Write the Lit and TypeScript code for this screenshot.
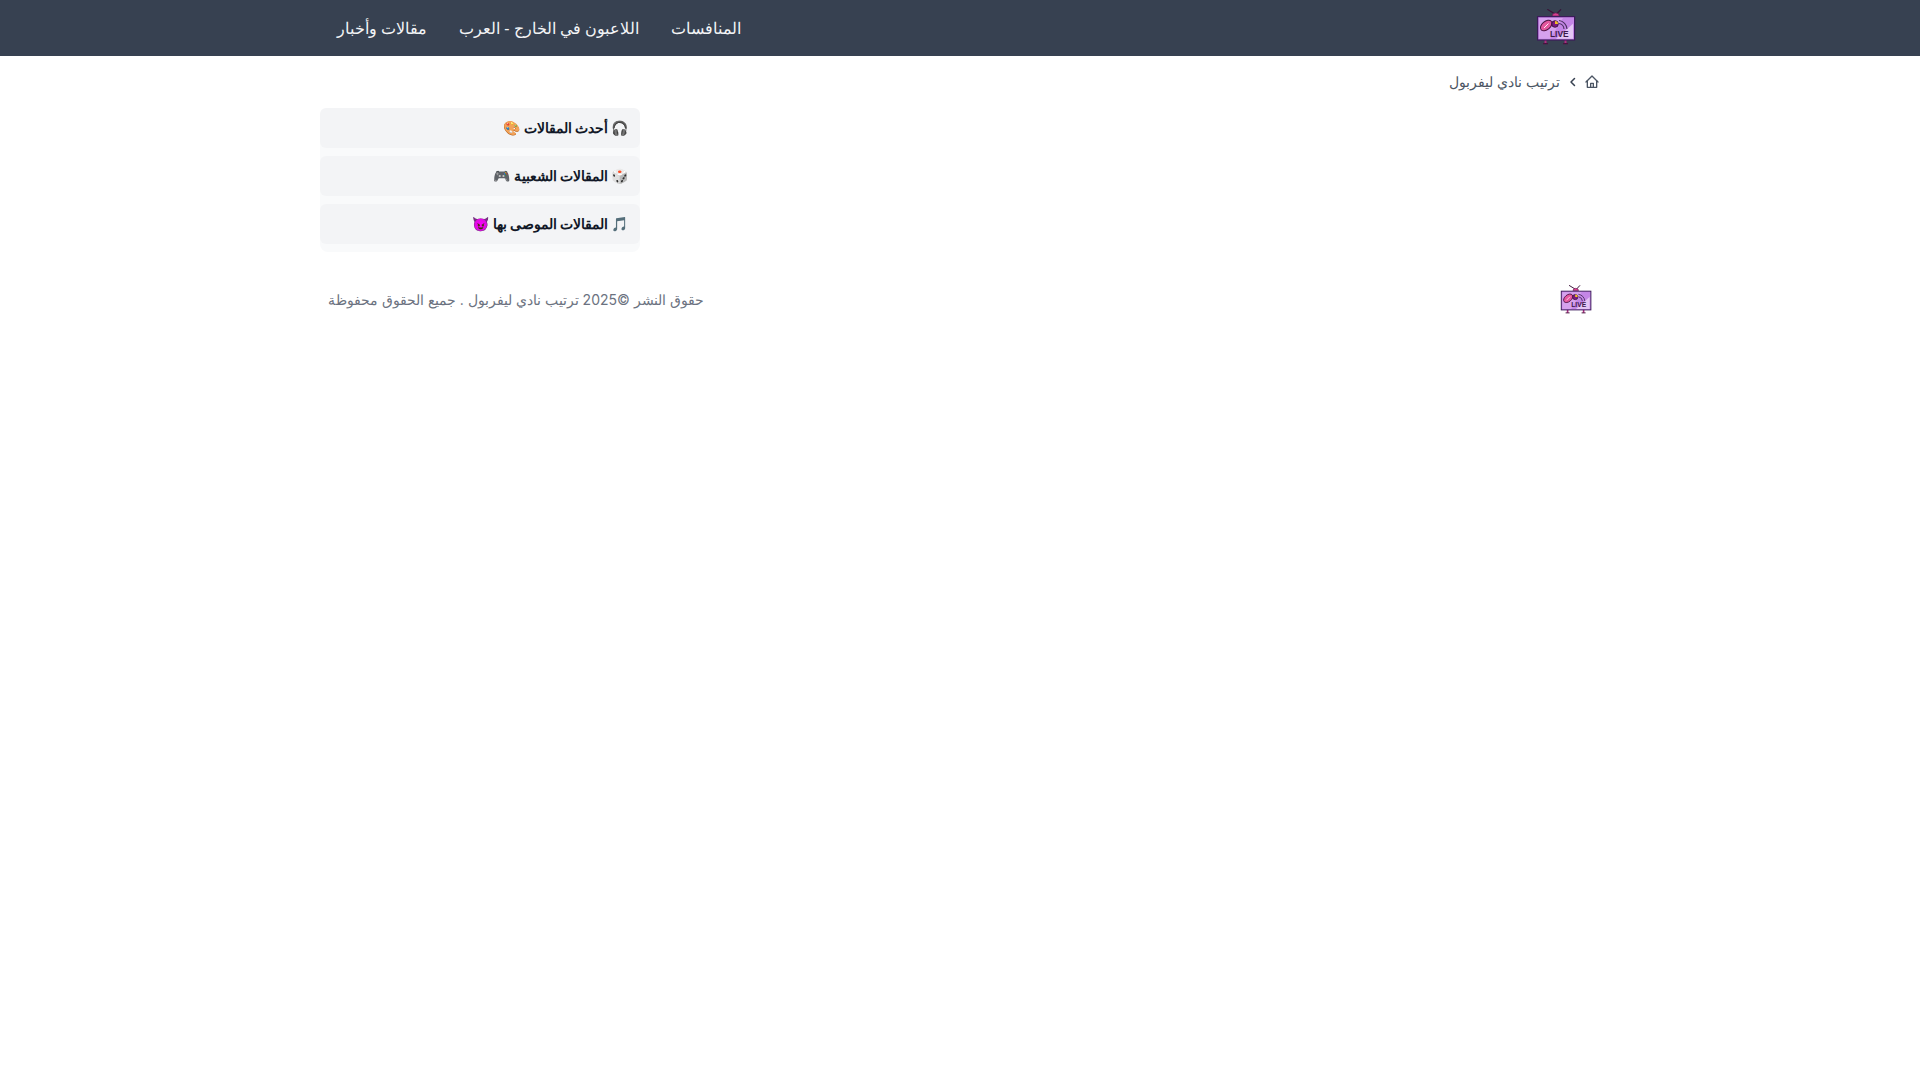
import { LitElement, html, css, svg } from "lit";
import { customElement } from "lit/decorators.js";

const logo = (w: number, h: number) => html`<svg width=${w} height=${h} viewBox="0 0 40 36" aria-hidden="true">
  ${svg`
  <path d="M11.300 .3L19 5M25 .3L20.700 5" stroke="#3a1238" stroke-width="1.200" fill="none"/>
  <path d="M16.200 7a3.500 3 0 0 1 7 0z" fill="#d6408f" stroke="#5a1a50" stroke-width=".6"/>
  <path d="M9.500 30v4.500M29.500 30v4.500" stroke="#b02a80" stroke-width="2"/>
  <path d="M7 34.700h5M27 34.700h5" stroke="#4a1240" stroke-width="1.200"/>
  <rect x="1.600" y="7.600" width="37" height="23.400" fill="#c486e6" stroke="#3c1a5a" stroke-width="1.200"/>
  <path d="M3 9h24L14 29.800H3z" fill="#d6a2ee"/>
  <path d="M20 29.800l17-15v15z" fill="#e4c6f4"/>
  <ellipse cx="10.200" cy="16.500" rx="6.600" ry="4.200" transform="rotate(-40 10.200 16.500)" fill="#e4569e" stroke="#4a1240" stroke-width="1"/>
  <path d="M8 19l4.500-4.500" stroke="#fff" stroke-width=".9"/>
  <circle cx="19" cy="15" r="3.300" fill="#7a1a80" stroke="#2c1030" stroke-width=".8"/>
  <path d="M19 11.900a3 3 0 0 1 3 3.100h-3z" fill="#f0c020"/>
  <path d="M23 11.500a9 9 0 0 1 8 8.500M23 14.500a6 6 0 0 1 5 5.500" stroke="#4a3060" stroke-width="1.100" fill="none"/>
  <g direction="ltr"><text x="14" y="27.800" font-family="Liberation Sans, sans-serif" font-weight="700" font-size="8.400" fill="#3c1a4a">LIVE</text></g>
  `}
</svg>`;

@customElement("app-root")
export class AppRoot extends LitElement {
  static styles = css`
    :host { display: block; font-family: Inter, system-ui, sans-serif, "Noto Color Emoji"; direction: rtl; color: #111827; }
    .nav { background: #374151; height: 56px; }
    .wrap { width: 1280px; margin: 0 auto; }
    .nav .wrap { height: 100%; display: flex; align-items: center; justify-content: space-between; }
    .brand { display: flex; margin-right: 24px; margin-bottom: 2px; }
    .links { display: flex; gap: 32px; padding: 0 0 0 17px; margin: 0; list-style: none; font-family: "Noto Sans", sans-serif; }
    .links a { color: #f3f4f6; font-size: 16px; line-height: 24px; text-decoration: none; display: block; }
    .crumbs { display: flex; align-items: center; height: 20px; margin-top: 16px; font-size: 14px; color: #4b5563; }
    .crumbs svg { display: block; }
    .crumbs span { padding-bottom: 2px; }
    .home { margin-left: 5px; }
    .chev { margin-left: 7px; }
    .side { width: 320px; margin-top: 16px; margin-right: 960px; background: #f9fafb; border-radius: 8px; padding-bottom: 8px; display: flex; flex-direction: column; gap: 8px; }
    .side a { display: flex; align-items: center; box-sizing: border-box; height: 40px; padding: 0 11px 2px 12px; background: #f3f4f6; border-radius: 6px; font-size: 14px; font-weight: 700; color: #111827; text-decoration: none; }
    .foot { display: flex; align-items: center; justify-content: space-between; margin-top: 24px; height: 48px; padding: 0 8px; font-size: 14px; color: #6b7280; }
    .foot .mark { display: flex; margin-bottom: 2px; }
    .foot .copy { padding-bottom: 2px; }
  `;

  render() {
    return html`
      <header class="nav"><div class="wrap">
        <a class="brand">${logo(40, 36)}</a>
        <ul class="links">
          <li><a>المنافسات</a></li>
          <li><a>اللاعبون في الخارج - العرب</a></li>
          <li><a>مقالات وأخبار</a></li>
        </ul>
      </div></header>
      <div class="wrap">
        <nav class="crumbs">
          <svg class="home" width="16" height="16" viewBox="0 0 24 24" fill="none" stroke="#4b5563" stroke-width="2" stroke-linecap="round" stroke-linejoin="round"><path d="M3 12l9-9 9 9"/><path d="M5 10v10h14V10"/><path d="M10 20v-6h4v6"/></svg>
          <svg class="chev" width="12" height="12" viewBox="0 0 24 24" fill="none" stroke="#374151" stroke-width="3" stroke-linecap="round" stroke-linejoin="round"><path d="M15 5l-7 7 7 7"/></svg>
          <span>ترتيب نادي ليفربول</span>
        </nav>
        <aside class="side">
          <a>🎧 أحدث المقالات 🎨</a>
          <a>🎲 المقالات الشعبية 🎮</a>
          <a>🎵 المقالات الموصى بها 😈</a>
        </aside>
        <footer class="foot">
          <span class="mark">${logo(32, 29)}</span>
          <span class="copy">حقوق النشر ©2025 ترتيب نادي ليفربول . جميع الحقوق محفوظة</span>
        </footer>
      </div>
    `;
  }
}
